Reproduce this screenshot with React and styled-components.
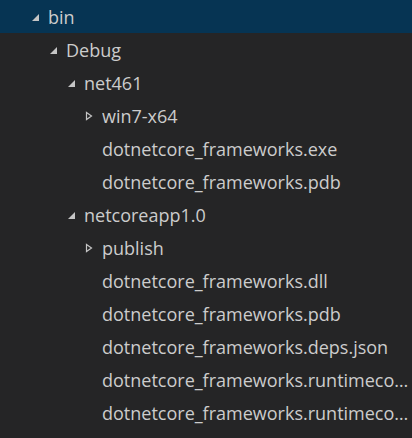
import React from 'react';
import styled, { createGlobalStyle } from 'styled-components';

const GlobalStyle = createGlobalStyle`
  html, body {
    margin: 0;
    padding: 0;
    background: #252526;
  }
`;

const Tree = styled.div`
  width: 412px;
  height: 438px;
  overflow: hidden;
  background: #252526;
  font-family: 'Open Sans', 'Noto Sans', sans-serif;
  font-size: 18px;
  color: #cccccc;
`;

const Row = styled.div`
  display: flex;
  align-items: center;
  height: 33px;
  padding-left: ${(p) => 30 + p.$depth * 18}px;
  background: ${(p) => (p.$selected ? '#063453' : 'transparent')};
  white-space: nowrap;
`;

const Twisty = styled.span`
  flex: 0 0 18px;
  display: flex;
  align-items: center;
  height: 100%;
`;

const Label = styled.span`
  flex: 1 1 auto;
  min-width: 0;
  overflow: hidden;
  text-overflow: ellipsis;
  padding-right: 2px;
`;

function Arrow({ open }) {
  if (open) {
    return (
      <svg width="10" height="10" viewBox="0 0 10 10">
        <polygon points="9,2 9,9 2,9" fill="#c5c5c5" />
      </svg>
    );
  }
  return (
    <svg width="10" height="10" viewBox="0 0 10 10">
      <polygon points="2.5,1.5 7.5,5 2.5,8.5" fill="none" stroke="#c5c5c5" strokeWidth="1.2" />
    </svg>
  );
}

const items = [
  { name: 'bin', depth: 0, folder: true, open: true, selected: true },
  { name: 'Debug', depth: 1, folder: true, open: true },
  { name: 'net461', depth: 2, folder: true, open: true },
  { name: 'win7-x64', depth: 3, folder: true, open: false },
  { name: 'dotnetcore_frameworks.exe', depth: 3 },
  { name: 'dotnetcore_frameworks.pdb', depth: 3 },
  { name: 'netcoreapp1.0', depth: 2, folder: true, open: true },
  { name: 'publish', depth: 3, folder: true, open: false },
  { name: 'dotnetcore_frameworks.dll', depth: 3 },
  { name: 'dotnetcore_frameworks.pdb', depth: 3 },
  { name: 'dotnetcore_frameworks.deps.json', depth: 3 },
  { name: 'dotnetcore_frameworks.runtimeconfig.json', depth: 3 },
  { name: 'dotnetcore_frameworks.runtimeconfig.dev.json', depth: 3 },
];

export default function App() {
  return (
    <>
      <GlobalStyle />
      <Tree>
        {items.map((item, i) => (
          <Row key={i} $depth={item.depth} $selected={item.selected}>
            <Twisty>{item.folder && <Arrow open={item.open} />}</Twisty>
            <Label>{item.name}</Label>
          </Row>
        ))}
      </Tree>
    </>
  );
}
